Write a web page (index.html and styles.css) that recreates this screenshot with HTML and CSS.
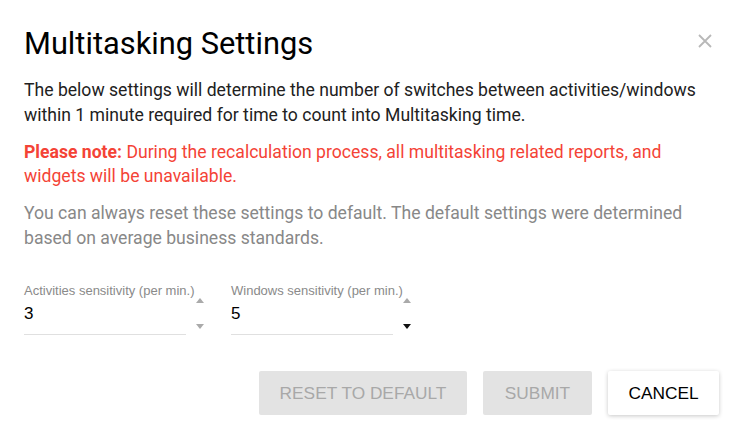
FILE: index.html
```html
<!DOCTYPE html>
<html>
<head>
<meta charset="utf-8">
<link rel="stylesheet" href="styles.css">
</head>
<body>
<div class="dialog">
  <div class="header">
    <h1 class="title">Multitasking Settings</h1>
    <button class="close" aria-label="Close">
      <svg width="14" height="14" viewBox="0 0 14 14"><path d="M1 1L13 13M13 1L1 13" stroke="#b8b8b8" stroke-width="1.8" fill="none"/></svg>
    </button>
  </div>
  <p class="text">The below settings will determine the number of switches between activities/windows within 1 minute required for time to count into Multitasking time.</p>
  <p class="text warn"><b>Please note:</b> During the recalculation process, all multitasking related reports, and widgets will be unavailable.</p>
  <p class="text muted">You can always reset these settings to default. The default settings were determined based on average business standards.</p>
  <div class="fields">
    <div class="field">
      <div class="field-main">
        <label class="label">Activities sensitivity (per min.)</label>
        <div class="value">3</div>
      </div>
      <div class="spin">
        <span class="arrow up"></span>
        <span class="arrow down"></span>
      </div>
    </div>
    <div class="field">
      <div class="field-main">
        <label class="label">Windows sensitivity (per min.)</label>
        <div class="value">5</div>
      </div>
      <div class="spin">
        <span class="arrow up"></span>
        <span class="arrow down dark"></span>
      </div>
    </div>
  </div>
  <div class="actions">
    <button class="btn disabled reset">RESET TO DEFAULT</button>
    <button class="btn disabled submit">SUBMIT</button>
    <button class="btn cancel">CANCEL</button>
  </div>
</div>
</body>
</html>
```
FILE: styles.css
```css
* { box-sizing: border-box; }
html, body { margin: 0; padding: 0; background: #fff; }
body { font-family: Roboto, "Noto Sans", sans-serif; color: #212121; }
.dialog { width: 739px; height: 423px; padding: 26px 20px 0 24px; }
.header { display: flex; justify-content: space-between; align-items: flex-start; height: 52px; }
.title { margin: 0; font-size: 30.8px; font-weight: 400; line-height: 36px; color: #000; }
.close { border: 0; background: none; padding: 0; margin: 8px 7px 0 0; width: 14px; height: 14px; cursor: pointer; }
.close svg { display: block; }
.text { margin: 0 0 12.5px; font-size: 17.6px; line-height: 24.5px; color: #212121; width: 690px; }
.warn { color: #f44336; }
.warn b { font-weight: 700; }
.muted { color: #888; }
.fields { display: flex; gap: 21px; margin-top: 33px; }
.field { display: flex; }
.field-main { width: 162px; border-bottom: 1px solid #e0e0e0; height: 52px; }
.label { display: block; font-family: "Liberation Sans", Arial, sans-serif; font-size: 13px; color: #8a8a8a; line-height: 15px; white-space: nowrap; }
.value { font-family: "Liberation Sans", Arial, sans-serif; font-size: 17px; color: #000; line-height: 20px; margin-top: 6px; }
.spin { display: flex; flex-direction: column; justify-content: space-between; align-items: center; width: 20px; margin-left: 4px; padding: 15px 0 6px; height: 52px; }
.arrow { width: 0; height: 0; border-left: 4.5px solid transparent; border-right: 4.5px solid transparent; }
.arrow.up { border-bottom: 5px solid #aaa; }
.arrow.down { border-top: 5px solid #aaa; }
.arrow.down.dark { border-top-color: #111; }
.actions { display: flex; justify-content: flex-end; gap: 16px; margin-top: 36px; }
.btn { font-family: "Liberation Sans", Arial, sans-serif; font-size: 17.3px; height: 44px; border: 0; border-radius: 2px; padding: 0; }
.btn.disabled { background: #e3e3e3; color: #a8a8a8; }
.reset { width: 208px; }
.submit { width: 109px; }
.cancel { width: 111px; background: #fff; color: #000; box-shadow: 0 1px 4px rgba(0,0,0,0.22); }
```
